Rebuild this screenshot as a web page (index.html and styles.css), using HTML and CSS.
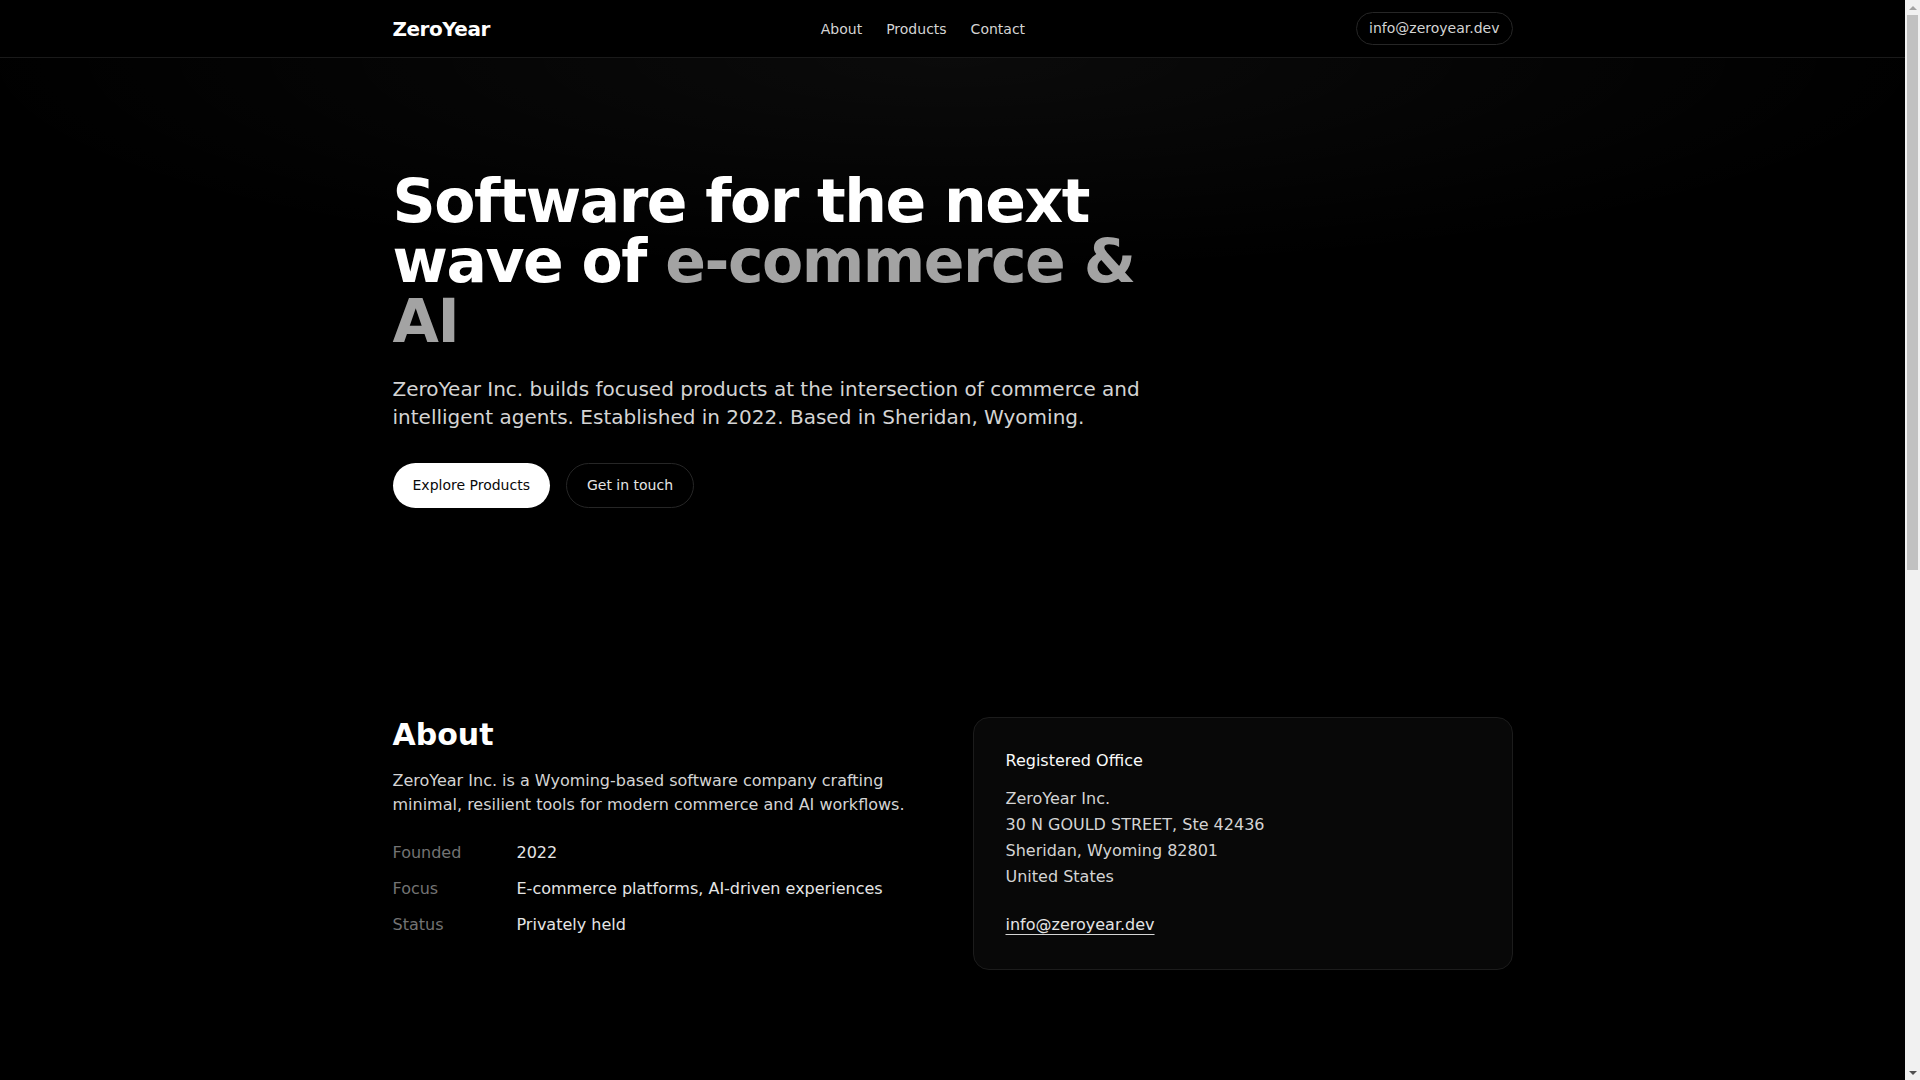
FILE: index.html
```html
<!DOCTYPE html>
<html lang="en">
<head>
<meta charset="utf-8">
<title>ZeroYear Inc.</title>
<link rel="stylesheet" href="styles.css">
</head>
<body>
<div class="page">
<header class="site-header">
  <div class="container header-inner">
    <a class="logo" href="#">ZeroYear</a>
    <nav class="nav">
      <a href="#about">About</a>
      <a href="#products">Products</a>
      <a href="#contact">Contact</a>
    </nav>
    <a class="pill" href="#">info@zeroyear.dev</a>
  </div>
</header>

<main>
  <section class="hero">
    <div class="container">
      <h1 class="hero-title">Software for the next wave of <span class="muted">e-commerce &amp; AI</span></h1>
      <p class="hero-lead">ZeroYear Inc. builds focused products at the intersection of commerce and intelligent agents. Established in 2022. Based in Sheridan, Wyoming.</p>
      <div class="hero-actions">
        <a class="btn btn-primary" href="#products">Explore Products</a>
        <a class="btn btn-ghost" href="#contact">Get in touch</a>
      </div>
    </div>
  </section>

  <section class="section" id="about">
    <div class="container about-grid">
      <div class="about-text">
        <h2 class="section-title">About</h2>
        <p class="section-lead">ZeroYear Inc. is a Wyoming-based software company crafting minimal, resilient tools for modern commerce and AI workflows.</p>
        <dl class="facts">
          <dt>Founded</dt><dd>2022</dd>
          <dt>Focus</dt><dd>E-commerce platforms, AI-driven experiences</dd>
          <dt>Status</dt><dd>Privately held</dd>
        </dl>
      </div>
      <div class="card">
        <h3 class="card-title">Registered Office</h3>
        <address class="address">
          ZeroYear Inc.<br>
          30 N GOULD STREET, Ste 42436<br>
          Sheridan, Wyoming 82801<br>
          United States
        </address>
        <p class="card-mail"><a href="#">info@zeroyear.dev</a></p>
      </div>
    </div>
  </section>

  <section class="section" id="products">
    <div class="container">
      <h2 class="section-title">Products</h2>
      <p class="section-lead">Focused tools for commerce teams and intelligent agents.</p>
      <div class="product-grid">
        <div class="card product">
          <h3 class="card-title">Commerce Platform</h3>
          <p class="product-text">Lean storefront and order infrastructure built for speed and reliability.</p>
        </div>
        <div class="card product">
          <h3 class="card-title">AI Agents</h3>
          <p class="product-text">Assistants that help customers discover, compare and buy products.</p>
        </div>
      </div>
    </div>
  </section>

  <section class="section" id="contact">
    <div class="container">
      <h2 class="section-title">Contact</h2>
      <p class="section-lead">Questions, partnerships or press — we would love to hear from you.</p>
      <div class="hero-actions">
        <a class="btn btn-primary" href="#">info@zeroyear.dev</a>
      </div>
    </div>
  </section>
</main>

<footer class="site-footer">
  <div class="container footer-inner">
    <span>© 2025 ZeroYear Inc. All rights reserved.</span>
    <span>Sheridan, Wyoming</span>
  </div>
</footer>
</div>

<div class="scrollbar" aria-hidden="true">
  <div class="sb-button"><span class="sb-arrow-up"></span></div>
  <div class="sb-track"><div class="sb-thumb"></div></div>
  <div class="sb-button"><span class="sb-arrow-down"></span></div>
</div>
</body>
</html>
```

FILE: styles.css
```css
* { box-sizing: border-box; }

html, body {
  margin: 0;
  padding: 0;
  height: 100%;
  overflow: hidden;
  background: #000;
  color: #fafafa;
  font-family: "DejaVu Sans", "Noto Sans", sans-serif;
}

body {
  display: flex;
}

.page {
  flex: 1;
  min-width: 0;
  height: 100vh;
  overflow-y: auto;
  scrollbar-width: none;
  background: #000;
}

.page::-webkit-scrollbar { display: none; }

/* Browser scrollbar as shown in the reference */
.scrollbar {
  width: 15px;
  height: 100vh;
  flex: none;
  display: flex;
  flex-direction: column;
  background: #f1f1f1;
}

.sb-button {
  height: 15px;
  flex: none;
  display: flex;
  align-items: center;
  justify-content: center;
}

.sb-arrow-up {
  width: 0;
  height: 0;
  border-left: 4px solid transparent;
  border-right: 4px solid transparent;
  border-bottom: 4px solid #a3a3a3;
}

.sb-arrow-down {
  width: 0;
  height: 0;
  border-left: 4px solid transparent;
  border-right: 4px solid transparent;
  border-top: 4px solid #505050;
}

.sb-track {
  flex: 1;
  padding: 0 2px;
}

.sb-thumb {
  height: 555px;
  background: #c1c1c1;
}

a { color: inherit; text-decoration: none; }

.container {
  max-width: 1120px;
  margin: 0 auto;
}

/* Header */
.site-header {
  background: #000;
  border-bottom: 1px solid #1a1a1a;
}

.header-inner {
  display: flex;
  align-items: center;
  justify-content: space-between;
  padding: 12px 0;
}

.logo {
  font-size: 20px;
  font-weight: 700;
  letter-spacing: -0.025em;
  color: #fff;
  line-height: 28px;
}

.nav {
  display: flex;
  gap: 24px;
  font-size: 14px;
  line-height: 20px;
  color: #d4d4d4;
}

.pill {
  font-size: 14px;
  line-height: 19px;
  color: #d4d4d4;
  padding: 6px 12px;
  border: 1px solid #262626;
  border-radius: 999px;
}

/* Hero */
.hero {
  padding: 113px 0 113px;
  background: radial-gradient(ellipse 75% 55% at 50% 0%, rgba(255, 255, 255, 0.045), rgba(255, 255, 255, 0) 70%);
}

.hero-title {
  margin: 0;
  max-width: 768px;
  font-size: 60px;
  line-height: 60px;
  font-weight: 700;
  letter-spacing: -0.025em;
  color: #fff;
}

.muted { color: #a3a3a3; }

.hero-lead {
  margin: 24px 0 0;
  max-width: 768px;
  font-size: 20px;
  line-height: 28px;
  color: #d4d4d4;
}

.hero-actions {
  display: flex;
  gap: 16px;
  margin-top: 32px;
}

.btn {
  display: inline-block;
  font-size: 14px;
  line-height: 21px;
  border-radius: 999px;
}

.btn-primary {
  background: #fff;
  color: #0a0a0a;
  padding: 12px 20px;
}

.btn-ghost {
  color: #e5e5e5;
  border: 1px solid #262626;
  padding: 11px 20px;
}

/* Sections */
.section { padding: 96px 0; }

.section-title {
  margin: 0;
  font-size: 30px;
  line-height: 36px;
  font-weight: 700;
  color: #fff;
}

.section-lead {
  margin: 16px 0 0;
  font-size: 16px;
  line-height: 24px;
  color: #d4d4d4;
}

.about-grid {
  display: grid;
  grid-template-columns: 1fr 1fr;
  gap: 40px;
  align-items: start;
}

.facts {
  margin: 24px 0 0;
  display: grid;
  grid-template-columns: 112px 1fr;
  gap: 12px;
  font-size: 16px;
  line-height: 24px;
}

.facts dt { color: #737373; }
.facts dd { margin: 0; color: #e5e5e5; }

.card {
  background: #080808;
  border: 1px solid #1c1c1c;
  border-radius: 16px;
  padding: 31px 32px 32px;
}

.card-title {
  margin: 0;
  font-size: 16px;
  line-height: 24px;
  font-weight: 400;
  color: #fafafa;
}

.address {
  margin-top: 13px;
  font-style: normal;
  font-size: 16px;
  line-height: 26px;
  color: #d4d4d4;
}

.card-mail {
  margin: 23px 0 0;
  font-size: 16px;
  line-height: 24px;
}

.card-mail a {
  color: #e5e5e5;
  text-decoration: underline;
  text-decoration-color: #d4d4d4;
  text-underline-offset: 4px;
}

.product-grid {
  display: grid;
  grid-template-columns: 1fr 1fr;
  gap: 40px;
  margin-top: 40px;
}

.product { min-height: 220px; }

.product-text {
  margin: 12px 0 0;
  font-size: 16px;
  line-height: 26px;
  color: #a3a3a3;
}

.site-footer {
  border-top: 1px solid #1a1a1a;
  padding: 41px 0;
  font-size: 14px;
  line-height: 20px;
  color: #737373;
}

.footer-inner {
  display: flex;
  justify-content: space-between;
}
```
